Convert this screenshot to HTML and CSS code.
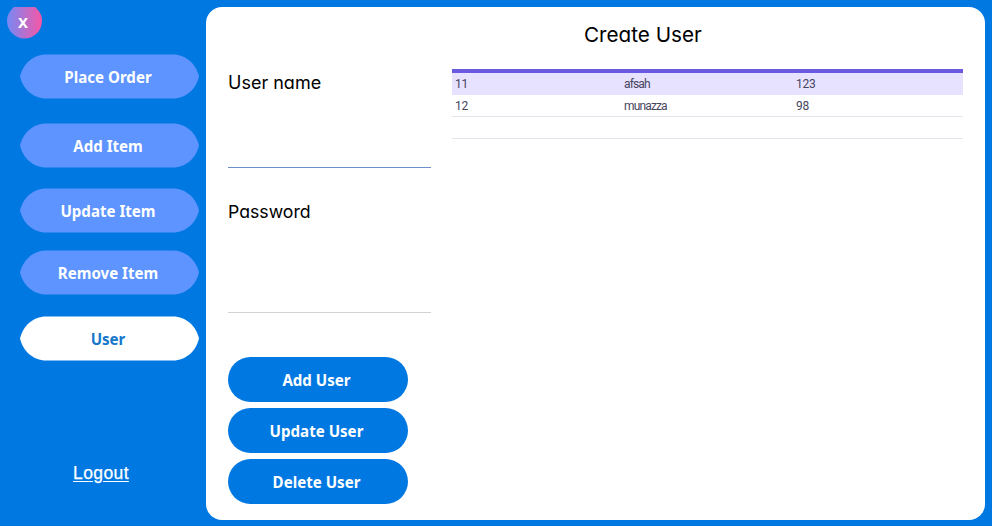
FILE: index.html
```html
<!DOCTYPE html>
<html lang="en">
<head>
<meta charset="utf-8">
<title>Create User</title>
<link rel="stylesheet" href="styles.css">
</head>
<body>
<aside class="sidebar">
  <button class="close">X</button>
  <nav class="nav">
    <button class="nav-item place">Place Order</button>
    <button class="nav-item add">Add Item</button>
    <button class="nav-item update">Update Item</button>
    <button class="nav-item remove">Remove Item</button>
    <button class="nav-item active">User</button>
  </nav>
  <a class="logout" href="#">Logout</a>
</aside>
<main class="panel">
  <h1 class="title">Create User</h1>
  <div class="content">
    <form class="form">
      <label class="label" for="name">User name</label>
      <input class="field focused" id="name" type="text">
      <label class="label second" for="pass">Password</label>
      <input class="field tall" id="pass" type="password">
      <div class="actions">
        <button class="action" type="button">Add User</button>
        <button class="action" type="button">Update User</button>
        <button class="action" type="button">Delete User</button>
      </div>
    </form>
    <div class="table">
      <div class="row selected"><span>11</span><span class="name">afsah</span><span>123</span></div>
      <div class="row"><span>12</span><span class="name">munazza</span><span>98</span></div>
      <div class="row"></div>
    </div>
  </div>
</main>
</body>
</html>
```
FILE: styles.css
```css
* { box-sizing: border-box; }
body {
  margin: 0;
  width: 992px;
  height: 526px;
  overflow: hidden;
  display: flex;
  background: #0078e2;
  font-family: "Noto Sans", sans-serif;
}
button {
  border: 0;
  padding: 0;
  font: 700 15px/20px "Noto Sans", sans-serif;
  color: #fff;
}
.sidebar {
  width: 206px;
  padding: 7px 0 0 7px;
  display: flex;
  flex-direction: column;
  align-items: flex-start;
}
.close {
  width: 35px;
  height: 32px;
  padding: 0 3px 2px 0;
  clip-path: circle(17.5px at 17.5px 14px);
  background: linear-gradient(90deg, #7589f5, #f756a6);
  font-size: 15px;
}
.nav {
  display: flex;
  flex-direction: column;
  padding: 15px 0 0 13px;
}
.nav-item {
  width: 179px;
  height: 45px;
  padding-right: 3px;
  background: #5e94ff;
  font-size: 15.1px;
  clip-path: path("M0 22.5C3 10 13 .5 26 .5H153C166 .5 176 10 179 22.5C176 35 166 44.5 153 44.5H26C13 44.5 3 35 0 22.5Z");
}
.add { margin-top: 24px; }
.update { margin-top: 20px; }
.remove { margin-top: 17px; }
.active { margin-top: 21px; background: #fff; color: #1677cb; }
.logout {
  margin: 102px 0 0 66px;
  color: #fff;
  font: 17.5px/20px "Liberation Sans", Arial, sans-serif;
  letter-spacing: .4px;
  -webkit-text-stroke: .25px #fff;
  text-underline-offset: 2px;
}
.panel {
  width: 779px;
  height: 513px;
  margin-top: 7px;
  border-radius: 16px;
  background: #fff;
}
.title, .label {
  font-family: "Comic Sans MS", Inter, sans-serif;
  font-feature-settings: "cv11";
  font-weight: 400;
  color: #000;
}
.title {
  margin: 0;
  padding: 13px 0 0 378px;
  height: 62px;
  font-size: 20.7px;
  line-height: 30px;
}
.content { display: flex; padding-left: 22px; }
.form { width: 224px; }
.label {
  display: block;
  height: 26px;
  padding-top: 1px;
  font-size: 18px;
  line-height: 26px;
}
.field {
  display: block;
  width: 203px;
  height: 73px;
  padding: 0;
  border: 0;
  border-bottom: 1px solid #d0d2d6;
  background: none;
}
.focused { border-bottom-color: #6b8fc8; }
.second { margin-top: 31px; padding-top: 0; font-size: 17.7px; }
.tall { height: 88px; }
.actions {
  display: grid;
  gap: 6px;
  padding-top: 44px;
}
.action {
  width: 180px;
  height: 45px;
  border-radius: 23px;
  background: #0078e2;
  padding: 1px 3px 0 0;
  font-size: 15.1px;
}
.table {
  width: 511px;
  border-top: 4px solid #6a5ae0;
  font: 12px/23px Roboto, sans-serif;
  color: #47455e;
}
.row {
  height: 22px;
  display: grid;
  grid-template-columns: 169px 172px 1fr;
  padding-left: 3px;
  border-bottom: 1px solid #e4e4ec;
}
.row span { letter-spacing: -.3px; }
.row .name { letter-spacing: -.85px; }
.selected { background: #e7e2ff; border-color: #e7e2ff; }
```
